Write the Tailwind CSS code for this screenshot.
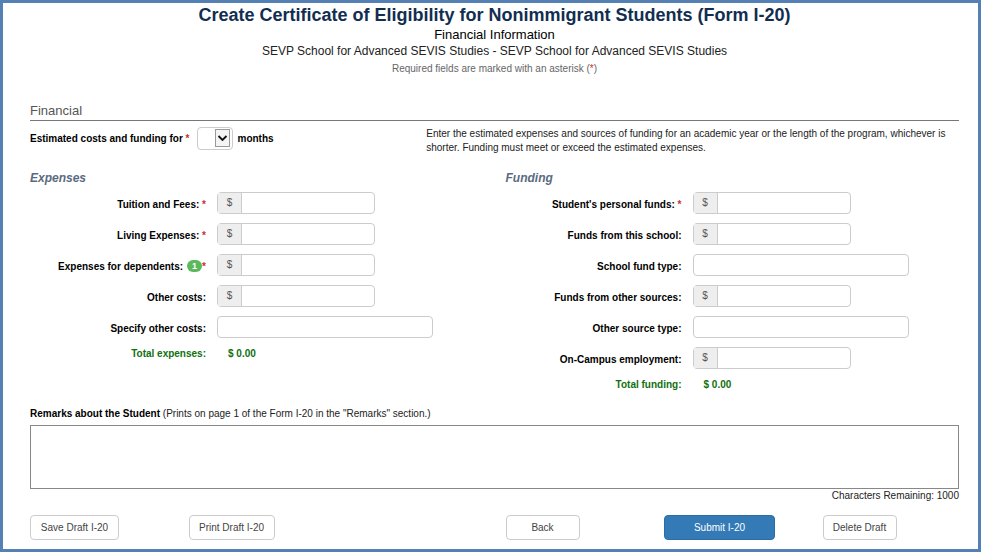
<!DOCTYPE html>
<html lang="en">
  <head>
    <meta charset="UTF-8" />
    <meta name="viewport" content="width=device-width, initial-scale=1" />
    <title>Create Certificate of Eligibility (Form I-20)</title>
    <script src="https://cdn.jsdelivr.net/npm/@tailwindcss/browser@4"></script>
  </head>
  <body
    class="min-h-screen border-3 border-[#5480b4] bg-white pl-[27px] pr-[19px] pt-px pb-2 font-['Liberation_Sans',Arial,sans-serif] text-[10px] text-black"
  >
    <header class="text-center">
      <h1 class="text-[18px] leading-[22px] font-bold text-[#112e51]">
        Create Certificate of Eligibility for Nonimmigrant Students (Form I-20)
      </h1>
      <p class="text-[13px] leading-[17px]">Financial Information</p>
      <p class="text-[12px] leading-[17px] text-[#222]">
        SEVP School for Advanced SEVIS Studies - SEVP School for Advanced SEVIS Studies
      </p>
      <p class="text-[10px] leading-[18px] text-[#666]">
        Required fields are marked with an asterisk (<span class="text-[#c9302c]">*</span>)
      </p>
    </header>

    <form>
      <h2 class="mt-6 border-b border-[#777] text-[13px] leading-[18px] text-[#555]">
        Financial
      </h2>

      <div class="mt-1.5 grid grid-cols-12 gap-x-[22px]">
        <div class="col-span-5 flex h-[23px] items-center font-bold">
          <label for="months">Estimated costs and funding for <span class="text-[#c9302c]">*</span></label>
          <span class="relative mr-1 ml-2 h-[23px] w-9">
            <select
              id="months"
              class="h-full w-full appearance-none rounded-sm border border-[#ccc] bg-white"
            >
              <option></option>
            </select>
            <svg
              class="pointer-events-none absolute top-[2px] right-[3px] h-[18px] w-[15px] border border-[#999] bg-[#f4f4f4]"
              viewBox="0 0 13 16"
              fill="none"
              stroke="#111"
              stroke-width="1.8"
            >
              <path d="M2.5 6l4 4 4-4" />
            </svg>
          </span>
          <span>months</span>
        </div>
        <p class="col-span-7 leading-[14px] text-[#222]">
          Enter the estimated expenses and sources of funding for an academic year or the length of the program, whichever is shorter. Funding must meet or exceed the estimated expenses.
        </p>
      </div>

      <div class="mt-[13px] grid grid-cols-2 gap-x-[22px]">
        <!-- Expenses -->
        <section>
          <h3 class="text-[12px] leading-5 font-bold text-[#5b6b7f] italic">Expenses</h3>
          <div class="mt-1 grid grid-cols-[176px_1fr] items-center gap-x-[11px] gap-y-[9px]">
            <label for="tuition" class="pt-0.5 text-right font-bold">Tuition and Fees: <span class="text-[#c9302c]">*</span></label>
            <div class="flex h-[22px] w-[158px] rounded-sm border border-[#ccc]">
              <span class="w-6 border-r border-[#ccc] bg-[#eee] text-center leading-5 text-[#555]">$</span>
              <input id="tuition" type="text" class="w-0 flex-1 px-2" />
            </div>

            <label for="living" class="pt-0.5 text-right font-bold">Living Expenses: <span class="text-[#c9302c]">*</span></label>
            <div class="flex h-[22px] w-[158px] rounded-sm border border-[#ccc]">
              <span class="w-6 border-r border-[#ccc] bg-[#eee] text-center leading-5 text-[#555]">$</span>
              <input id="living" type="text" class="w-0 flex-1 px-2" />
            </div>

            <label for="dependents" class="flex items-center justify-end pt-0.5 font-bold">Expenses for dependents:<span class="ml-1 h-3 w-[15px] rounded-full bg-[#5cb85c] text-center text-[9px] leading-3 text-white">1</span><span class="text-[#c9302c]">*</span></label>
            <div class="flex h-[22px] w-[158px] rounded-sm border border-[#ccc]">
              <span class="w-6 border-r border-[#ccc] bg-[#eee] text-center leading-5 text-[#555]">$</span>
              <input id="dependents" type="text" class="w-0 flex-1 px-2" />
            </div>

            <label for="otherCosts" class="pt-0.5 text-right font-bold">Other costs:</label>
            <div class="flex h-[22px] w-[158px] rounded-sm border border-[#ccc]">
              <span class="w-6 border-r border-[#ccc] bg-[#eee] text-center leading-5 text-[#555]">$</span>
              <input id="otherCosts" type="text" class="w-0 flex-1 px-2" />
            </div>

            <label for="specifyCosts" class="pt-0.5 text-right font-bold">Specify other costs:</label>
            <input id="specifyCosts" type="text" class="h-[22px] w-[216px] rounded-sm border border-[#ccc] px-2" />

            <span class="text-right leading-[14px] font-bold text-[#107010]">Total expenses:</span>
            <output class="pl-[11px] leading-[14px] font-bold text-[#107010]">$ 0.00</output>
          </div>
        </section>

        <!-- Funding -->
        <section>
          <h3 class="text-[12px] leading-5 font-bold text-[#5b6b7f] italic">Funding</h3>
          <div class="mt-1 grid grid-cols-[176px_1fr] items-center gap-x-[11px] gap-y-[9px]">
            <label for="personalFunds" class="pt-0.5 text-right font-bold">Student's personal funds: <span class="text-[#c9302c]">*</span></label>
            <div class="flex h-[22px] w-[158px] rounded-sm border border-[#ccc]">
              <span class="w-6 border-r border-[#ccc] bg-[#eee] text-center leading-5 text-[#555]">$</span>
              <input id="personalFunds" type="text" class="w-0 flex-1 px-2" />
            </div>

            <label for="schoolFunds" class="pt-0.5 text-right font-bold">Funds from this school:</label>
            <div class="flex h-[22px] w-[158px] rounded-sm border border-[#ccc]">
              <span class="w-6 border-r border-[#ccc] bg-[#eee] text-center leading-5 text-[#555]">$</span>
              <input id="schoolFunds" type="text" class="w-0 flex-1 px-2" />
            </div>

            <label for="schoolType" class="pt-0.5 text-right font-bold">School fund type:</label>
            <input id="schoolType" type="text" class="h-[22px] w-[216px] rounded-sm border border-[#ccc] px-2" />

            <label for="otherFunds" class="pt-0.5 text-right font-bold">Funds from other sources:</label>
            <div class="flex h-[22px] w-[158px] rounded-sm border border-[#ccc]">
              <span class="w-6 border-r border-[#ccc] bg-[#eee] text-center leading-5 text-[#555]">$</span>
              <input id="otherFunds" type="text" class="w-0 flex-1 px-2" />
            </div>

            <label for="otherType" class="pt-0.5 text-right font-bold">Other source type:</label>
            <input id="otherType" type="text" class="h-[22px] w-[216px] rounded-sm border border-[#ccc] px-2" />

            <label for="employment" class="pt-0.5 text-right font-bold">On-Campus employment:</label>
            <div class="flex h-[22px] w-[158px] rounded-sm border border-[#ccc]">
              <span class="w-6 border-r border-[#ccc] bg-[#eee] text-center leading-5 text-[#555]">$</span>
              <input id="employment" type="text" class="w-0 flex-1 px-2" />
            </div>

            <span class="text-right leading-[14px] font-bold text-[#107010]">Total funding:</span>
            <output class="pl-[11px] leading-[14px] font-bold text-[#107010]">$ 0.00</output>
          </div>
        </section>
      </div>

      <label for="remarks" class="mt-3.5 block leading-4 text-[#222]"
        ><b class="text-black">Remarks about the Student</b> (Prints on page 1 of the Form I-20 in the "Remarks" section.)</label
      >
      <textarea
        id="remarks"
        maxlength="1000"
        class="mt-[3px] block h-16 w-full resize-none border border-[#888] p-1"
      ></textarea>
      <p class="text-right leading-[14px] text-[#222]">Characters Remaining: 1000</p>

      <div class="mt-3 grid grid-cols-12 justify-items-start gap-x-[22px] text-[#444]">
        <button type="button" class="col-span-2 h-[25px] w-[89px] rounded-sm border border-[#ccc] bg-white">Save Draft I-20</button>
        <button type="button" class="col-span-4 h-[25px] w-[86px] rounded-sm border border-[#ccc] bg-white">Print Draft I-20</button>
        <button type="button" class="col-span-2 h-[25px] w-[74px] rounded-sm border border-[#ccc] bg-white">Back</button>
        <button type="submit" class="col-span-2 h-[25px] w-[111px] rounded-sm border border-[#2e6da4] bg-[#337ab7] text-white">Submit I-20</button>
        <button type="button" class="col-span-2 h-[25px] w-[74px] rounded-sm border border-[#ccc] bg-white">Delete Draft</button>
      </div>
    </form>
  </body>
</html>
